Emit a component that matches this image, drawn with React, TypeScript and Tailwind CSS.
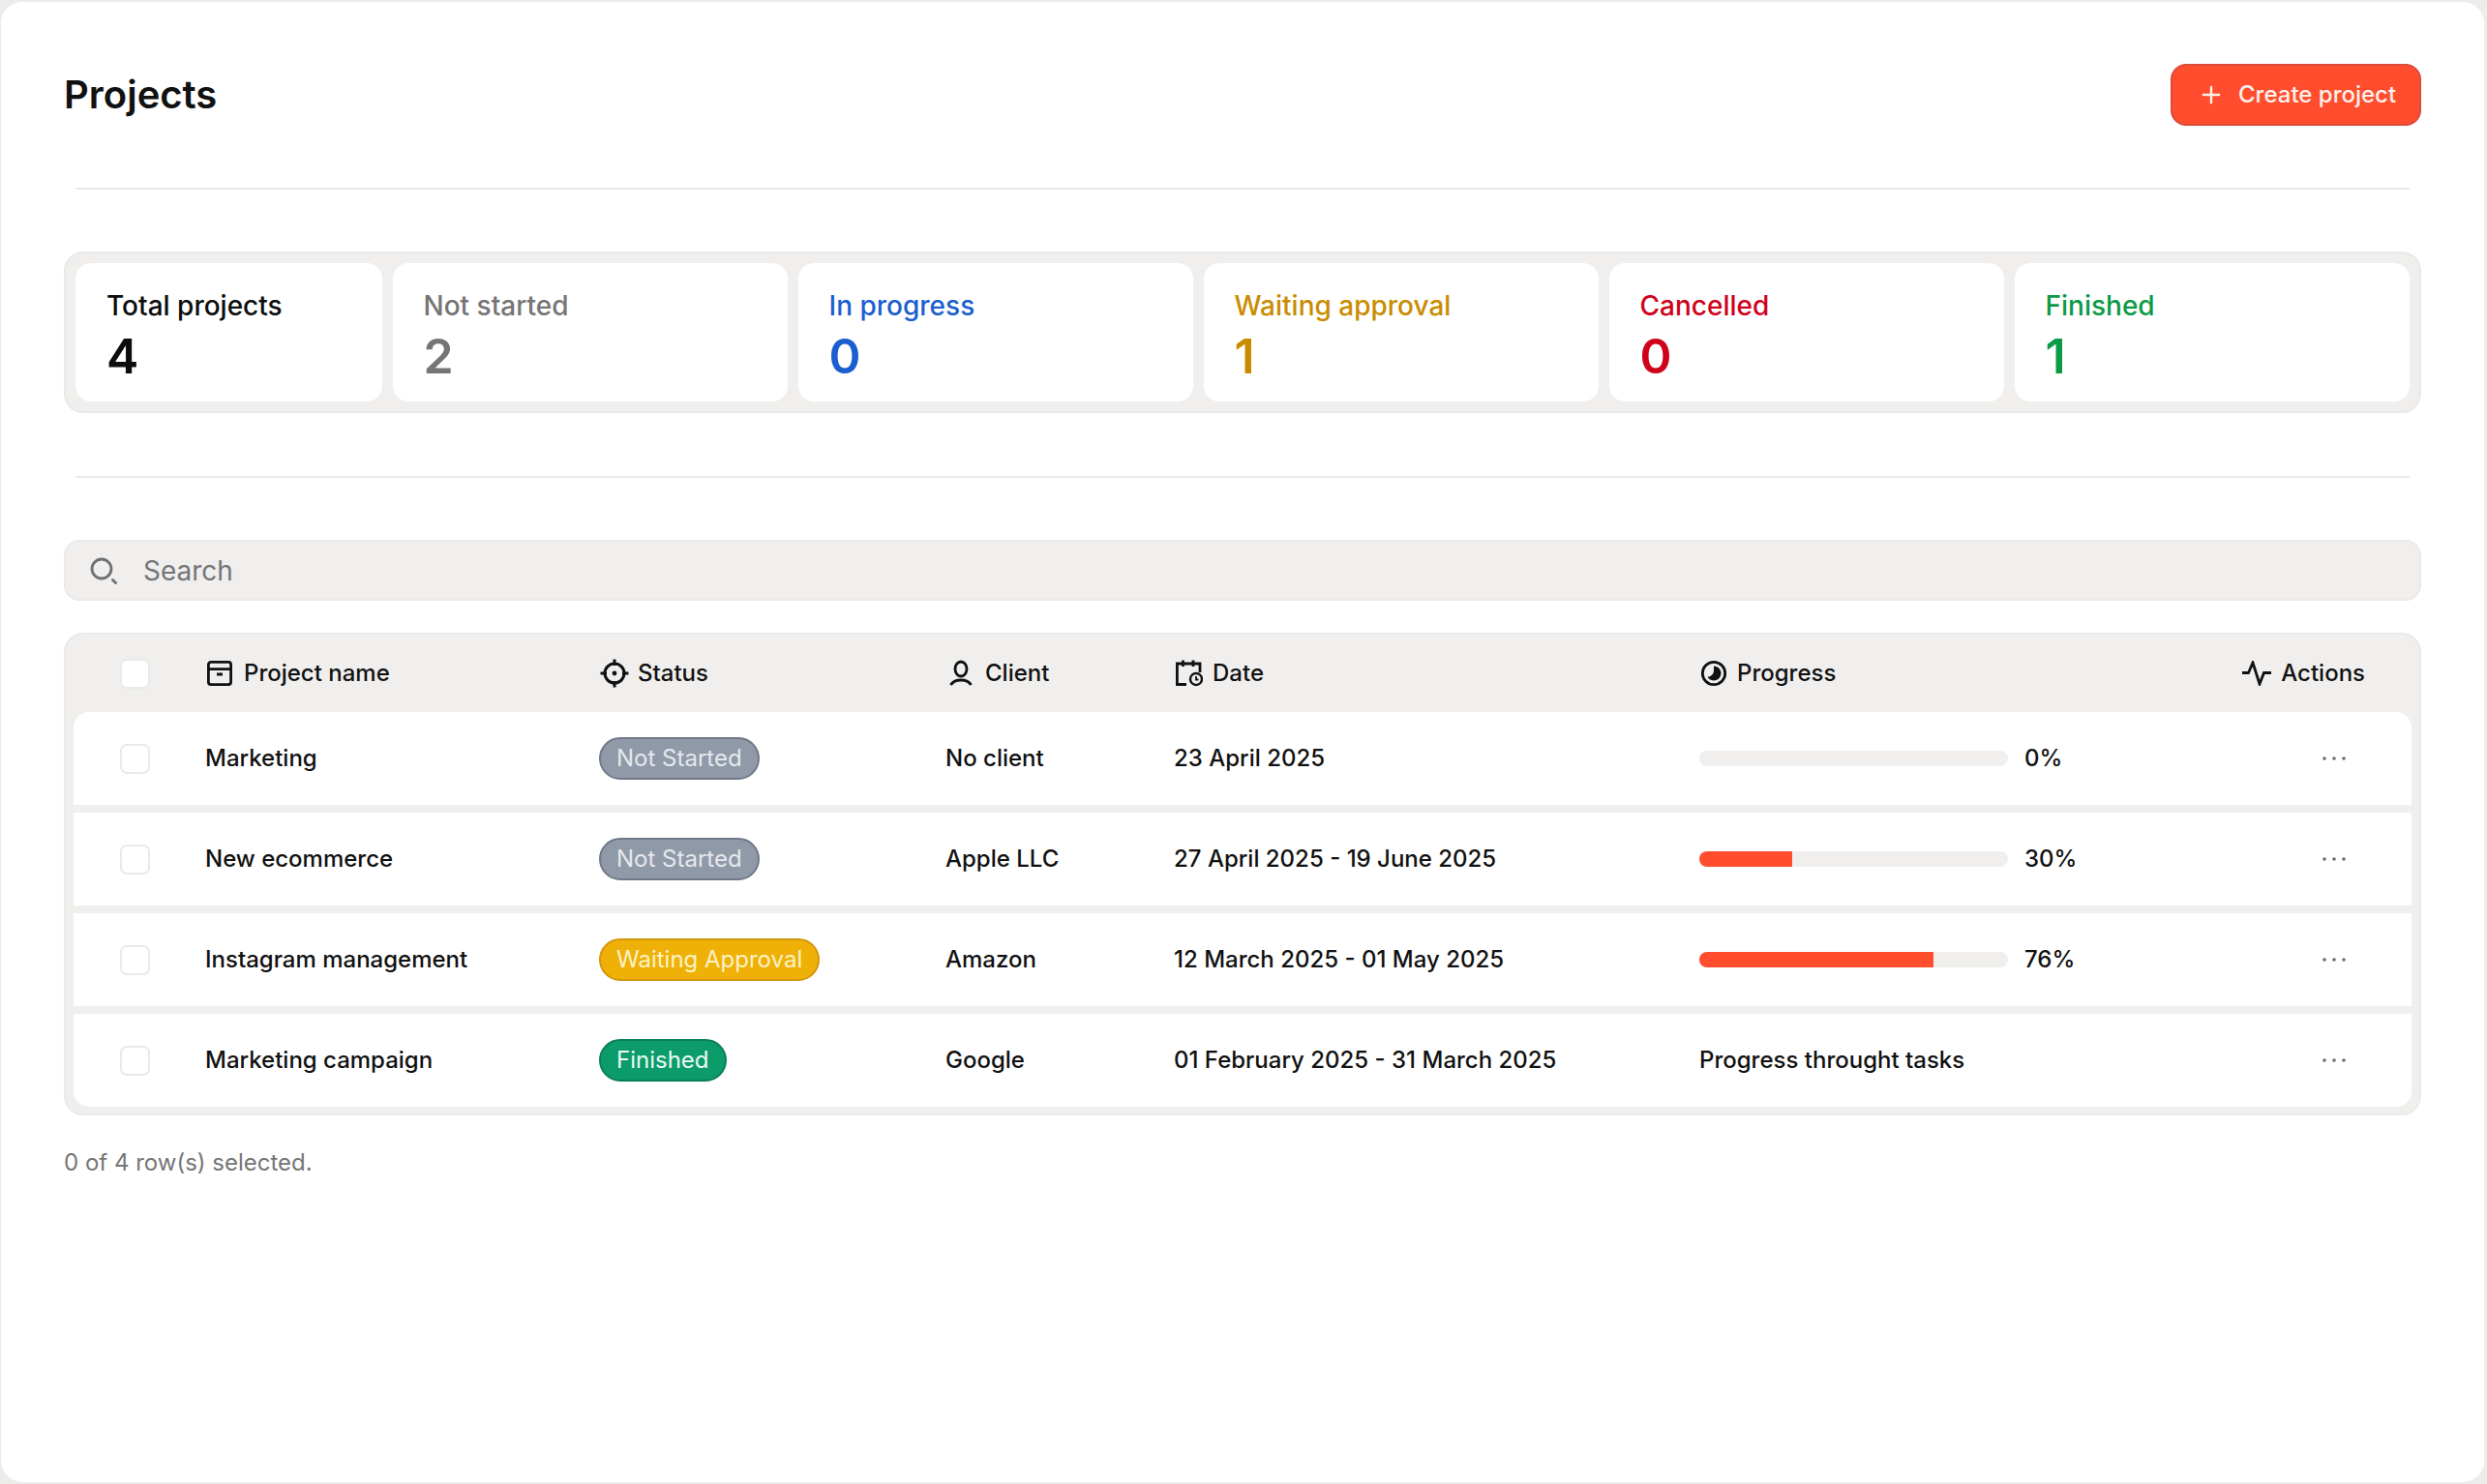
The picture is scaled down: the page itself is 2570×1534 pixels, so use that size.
import { Plus } from "lucide-react";

const font = "[font-family:Inter,sans-serif]";
const cols = "grid grid-cols-[136px_407px_358px_236px_543px_1fr] items-center";

const stats = [
    { label: "Total projects", value: "4", color: "text-[#0d0d0d]" },
    { label: "Not started", value: "2", color: "text-[#757575]" },
    { label: "In progress", value: "0", color: "text-[#1a5fd0]" },
    { label: "Waiting approval", value: "1", color: "text-[#c98c00]" },
    { label: "Cancelled", value: "0", color: "text-[#d0021b]" },
    { label: "Finished", value: "1", color: "text-[#0b9a45]" },
];

const rows = [
    { name: "Marketing", status: "Not Started", badge: "bg-[#8f99a8] border-[#6f7988] text-[#e6e8ec]", client: "No client", date: "23 April 2025", progress: 0 },
    { name: "New ecommerce", status: "Not Started", badge: "bg-[#8f99a8] border-[#6f7988] text-[#e6e8ec]", client: "Apple LLC", date: "27 April 2025 - 19 June 2025", progress: 30 },
    { name: "Instagram management", status: "Waiting Approval", badge: "bg-[#efb008] border-[#d4960c] text-[#fdf3c4]", client: "Amazon", date: "12 March 2025 - 01 May 2025", progress: 76 },
    { name: "Marketing campaign", status: "Finished", badge: "bg-[#0c9b6a] border-[#0a7f57] text-[#e9fbf3]", client: "Google", date: "01 February 2025 - 31 March 2025", progress: null },
];

function BoxIcon() {
    return (
        <svg width="30" height="26" viewBox="0 0 30 26" fill="none" stroke="#111" strokeWidth="2.8" className="shrink-0">
            <rect x="3.4" y="1.4" width="23.2" height="23.2" rx="2.5" />
            <path d="M3.4 8.700h23.200M12 14h6" />
        </svg>
    );
}

function TargetIcon() {
    return (
        <svg width="30" height="30" viewBox="0 0 30 30" fill="none" stroke="#111" strokeWidth="3" className="shrink-0">
            <circle cx="15" cy="15" r="10" />
            <path d="M15 .5v6.500M15 23v6.500M.5 15h6.500M23 15h6.500" />
            <circle cx="15" cy="15" r="2.400" fill="#111" stroke="none" />
        </svg>
    );
}

function UserIcon() {
    return (
        <svg width="30" height="28" viewBox="0 0 30 28" fill="none" stroke="#111" strokeWidth="2.8" className="shrink-0">
            <ellipse cx="15" cy="9.500" rx="6" ry="7.500" />
            <path d="M4.500 26c2-3.500 6-5 10.500-5s8.500 1.500 10.500 5" />
        </svg>
    );
}

function CalendarClockIcon() {
    return (
        <svg width="30" height="28" viewBox="0 0 30 28" fill="none" stroke="#111" strokeWidth="2.800" className="shrink-0">
            <path d="M13 25.500H3.400V4H27v9" />
            <path d="M9.500 .5v6.500M20 .5v6.500" />
            <circle cx="23" cy="20" r="6" strokeWidth="2.400" />
            <path d="M23 17v3.500h2.500" strokeWidth="1.800" />
        </svg>
    );
}

function HalfCircleIcon() {
    return (
        <svg width="30" height="28" viewBox="0 0 30 28" fill="none" className="shrink-0">
            <circle cx="15" cy="14" r="11.700" stroke="#111" strokeWidth="2.800" />
            <path d="M15 6.500a7.500 7.500 0 1 1-6.500 11.200c3.500-.2 6.500-2.700 6.500-6.700z" fill="#111" />
        </svg>
    );
}

function PulseIcon() {
    return (
        <svg width="30" height="26" viewBox="0 0 30 26" fill="none" stroke="#111" strokeWidth="2.800" className="shrink-0">
            <path d="M0 12.500h6.500L11 2l7 22 4.500-11.500H30" strokeLinejoin="miter" />
        </svg>
    );
}

function SearchIcon() {
    return (
        <svg width="28" height="28" viewBox="0 0 28 28" fill="none" stroke="#707070" strokeWidth="2.800" className="shrink-0">
            <circle cx="12" cy="12" r="10" />
            <path d="M23.500 23.500l3 3" strokeLinecap="round" />
        </svg>
    );
}

function Dots() {
    return (
        <svg width="26" height="6" viewBox="0 0 26 6" fill="#6a6a6a">
            <circle cx="3" cy="3" r="1.800" />
            <circle cx="13" cy="3" r="1.800" />
            <circle cx="23" cy="3" r="1.800" />
        </svg>
    );
}

function Box() {
    return <div className="ml-[48px] h-[31px] w-[31px] rounded-[7px] border-2 border-[#e9e9e7] bg-white" />;
}

export default function App() {
    return (
        <div className={`h-[1534px] bg-[#ececea] pl-px pr-[3px] pt-[2px] ${font}`}>
            <div className="h-[1530px] rounded-[22px] bg-white px-[65px] pt-[64px]">
                {/* Header */}
                <div className="flex items-center justify-between">
                    <h1 className="text-[40px] font-semibold leading-[64px] text-[#111]">Projects</h1>
                    <button className="flex h-[64px] w-[259px] items-center gap-[14px] rounded-[16px] border-2 border-[#dc4a3a] bg-[#ff4d2d] pl-[26px] text-[24px] font-medium text-[#fff1ec]">
                        <Plus size={28} strokeWidth={2} className="shrink-0" />
                        Create project
                    </button>
                </div>

                <div className="mx-[12px] mt-[64px] h-[2px] bg-[#e9e9e7]" />

                {/* Quick stats */}
                <div className="mt-[64px] grid h-[167px] grid-cols-[317px_repeat(5,1fr)] gap-[10.5px] rounded-[20px] border-2 border-[#e9e9e7] bg-[#f0efed] p-[10px]">
                    {stats.map((stat) => (
                        <div key={stat.label} className="rounded-[16px] bg-white pl-[32px] pt-[28px]">
                            <p className={`text-[28px] font-[450] leading-[32px] ${stat.color}`}>{stat.label}</p>
                            <p className={`mt-[8px] text-[50px] font-semibold leading-[56px] ${stat.color}`}>{stat.value}</p>
                        </div>
                    ))}
                </div>

                <div className="mx-[12px] mt-[65px] h-[2px] bg-[#e9e9e7]" />

                {/* Search */}
                <div className="mt-[64px] flex h-[63px] items-center gap-[27px] rounded-[16px] border-2 border-[#ebeae8] bg-[#f0efed] pl-[25px] text-[28px] text-[#757575]">
                    <SearchIcon />
                    Search
                </div>

                {/* Table */}
                <div className="mt-[33px] h-[499px] rounded-[20px] border-2 border-[#ebeae8] bg-[#f0efed] px-[8px]">
                    <div className={`${cols} h-[80px] text-[24px] font-[450] text-[#111]`}>
                        <Box />
                        <div className="flex items-center gap-[10px]"><BoxIcon /><span>Project name</span></div>
                        <div className="flex items-center gap-[9px] pl-px"><TargetIcon /><span>Status</span></div>
                        <div className="flex items-center gap-[10px] pl-px"><UserIcon /><span>Client</span></div>
                        <div className="flex items-center gap-[10px]"><CalendarClockIcon /><span>Date</span></div>
                        <div className="flex items-center justify-between pr-[48px]">
                            <div className="flex items-center gap-[9px]"><HalfCircleIcon /><span>Progress</span></div>
                            <div className="flex items-center gap-[10px]"><PulseIcon /><span>Actions</span></div>
                        </div>
                    </div>
                    <div className="flex flex-col gap-[8px]">
                        {rows.map((row, i) => (
                            <div key={row.name} className={`${cols} h-[96px] bg-white text-[24px] font-[450] text-[#111] ${i === 0 ? "rounded-t-[16px]" : ""} ${i === 3 ? "rounded-b-[16px]" : ""}`}>
                                <Box />
                                <div>{row.name}</div>
                                <div>
                                    <span className={`inline-flex h-[44px] items-center rounded-full border-2 px-[16px] text-[24px] font-normal ${row.badge}`}>{row.status}</span>
                                </div>
                                <div>{row.client}</div>
                                <div>{row.date}</div>
                                <div className="flex items-center justify-between pr-[67px]">
                                    {row.progress === null ? (
                                        <span>Progress throught tasks</span>
                                    ) : (
                                        <div className="flex items-center gap-[17px]">
                                            <div className="h-[16px] w-[319px] overflow-hidden rounded-full bg-[#f0efed]">
                                                <div className="h-full bg-[#ff4d2d]" style={{ width: `${row.progress}%` }} />
                                            </div>
                                            <span>{row.progress}%</span>
                                        </div>
                                    )}
                                    <Dots />
                                </div>
                            </div>
                        ))}
                    </div>
                </div>

                <p className="mt-[33px] text-[24px] leading-[32px] text-[#757575]">0 of 4 row(s) selected.</p>
            </div>
        </div>
    );
}
